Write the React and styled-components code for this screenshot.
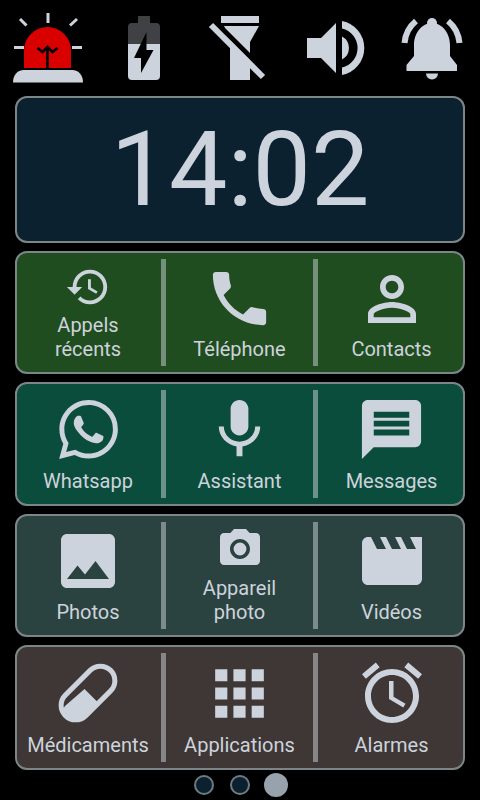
import React from "react";
import styled, { createGlobalStyle } from "styled-components";
import { SiWhatsapp } from "react-icons/si";

const ink = "#cdd3dc";

const GlobalStyle = createGlobalStyle`
  html, body {
    margin: 0;
    padding: 0;
    background: #000;
    font-family: Roboto, "Liberation Sans", sans-serif;
  }
`;

const Screen = styled.div`
  width: 480px;
  height: 800px;
  background: #000;
  overflow: hidden;
`;

// Status icons along the top
const StatusBar = styled.div`
  display: grid;
  grid-template-columns: repeat(5, 96px);
  height: 96px;
`;

const StatusIcon = styled.svg`
  display: block;
  width: 96px;
  height: 96px;
`;

const Content = styled.div`
  display: flex;
  flex-direction: column;
  gap: 8px;
  width: 450px;
  margin-left: 15px;
`;

const Panel = styled.section`
  box-sizing: border-box;
  border: 2px solid #7c8688;
  border-radius: 12px;
  background: ${({ $bg }) => $bg};
`;

const ClockPanel = styled(Panel)`
  height: 147px;
  display: flex;
  align-items: center;
  justify-content: center;
  color: ${ink};
  font-size: 104px;
  font-weight: 400;
  line-height: 1;
`;

const Rows = styled.div`
  display: flex;
  flex-direction: column;
  gap: 8px;
`;

const Row = styled(Panel)`
  height: ${({ $height }) => $height}px;
  display: grid;
  grid-template-columns: 144px 5px 147px 5px 145px;
`;

const Divider = styled.div`
  margin: 6px 0;
  background: ${ink};
  opacity: 0.5;
`;

const Tile = styled.div`
  display: flex;
  flex-direction: column;
  align-items: center;
  min-width: 0;
  padding: 7px 0 11px;

  &:first-child {
    padding-right: 2px;
  }

  &:last-child {
    padding-left: 2px;
  }
`;

const IconSlot = styled.div`
  flex: 1;
  display: flex;
  align-items: center;
  justify-content: center;
  color: ${ink};
`;

const Label = styled.div`
  color: ${ink};
  font-size: 20px;
  line-height: 24px;
  text-align: center;
  white-space: nowrap;
`;

const Glyph = styled.svg`
  display: block;
  fill: currentColor;
`;

const Dots = styled.div`
  display: flex;
  justify-content: center;
  align-items: center;
  height: 30px;
`;

const DotSlot = styled.div`
  width: 36px;
  display: flex;
  justify-content: center;
`;

const Dot = styled.div`
  box-sizing: border-box;
  width: ${({ $active }) => ($active ? 24 : 20)}px;
  height: ${({ $active }) => ($active ? 24 : 20)}px;
  border-radius: 50%;
  background: ${({ $active }) => ($active ? "#98a2ac" : "#0b2130")};
  border: ${({ $active }) => ($active ? "none" : "2px solid #6f7b82")};
`;

const paths = {
  history:
    "M13 3c-4.97 0-9 4.03-9 9H1l3.89 3.89.07.14L9 12H6c0-3.87 3.13-7 7-7s7 3.13 7 7-3.13 7-7 7c-1.93 0-3.68-.79-4.94-2.06l-1.42 1.42C8.27 19.99 10.51 21 13 21c4.97 0 9-4.03 9-9s-4.03-9-9-9zm-1 5v5l4.28 2.54.72-1.21-3.5-2.08V8H12z",
  phone:
    "M6.62 10.79c1.44 2.83 3.76 5.14 6.59 6.59l2.2-2.2c.27-.27.67-.36 1.02-.24 1.12.37 2.33.57 3.57.57.55 0 1 .45 1 1V20c0 .55-.45 1-1 1-9.39 0-17-7.61-17-17 0-.55.45-1 1-1h3.5c.55 0 1 .45 1 1 0 1.25.2 2.45.57 3.57.11.35.03.74-.25 1.02l-2.2 2.2z",
  person:
    "M12 5.9c1.16 0 2.1.94 2.1 2.1s-.94 2.1-2.1 2.1S9.9 9.16 9.9 8s.94-2.1 2.1-2.1m0 9c2.97 0 6.1 1.46 6.1 2.1v1.1H5.9V17c0-.64 3.13-2.1 6.1-2.1M12 4C9.79 4 8 5.79 8 8s1.79 4 4 4 4-1.79 4-4-1.79-4-4-4zm0 9c-2.67 0-8 1.34-8 4v3h16v-3c0-2.66-5.33-4-8-4z",
  mic:
    "M12 14c1.66 0 3-1.34 3-3V5c0-1.66-1.34-3-3-3S9 3.34 9 5v6c0 1.66 1.34 3 3 3zm5.3-3c0 3-2.54 5.1-5.3 5.1S6.7 14 6.7 11H5c0 3.41 2.72 6.23 6 6.72V21h2v-3.28c3.28-.48 6-3.3 6-6.72h-1.7z",
  message:
    "M20 2H4c-1.1 0-1.99.9-1.99 2L2 22l4-4h14c1.1 0 2-.9 2-2V4c0-1.1-.9-2-2-2zm-2 12H6v-2h12v2zm0-3H6V9h12v2zm0-3H6V6h12v2z",
  photo:
    "M21 19V5c0-1.1-.9-2-2-2H5c-1.1 0-2 .9-2 2v14c0 1.1.9 2 2 2h14c1.1 0 2-.9 2-2zM8.5 13.5l2.5 3.01L14.5 12l4.5 6H5l3.5-4.5z",
  camera:
    "M9 2L7.17 4H4c-1.1 0-2 .9-2 2v12c0 1.1.9 2 2 2h16c1.1 0 2-.9 2-2V6c0-1.1-.9-2-2-2h-3.17L15 2H9zm3 15c-2.76 0-5-2.24-5-5s2.24-5 5-5 5 2.24 5 5-2.24 5-5 5zM12 8.8a3.2 3.2 0 1 0 0 6.4 3.2 3.2 0 0 0 0-6.4z",
  movie:
    "M18 4l2 4h-3l-2-4h-2l2 4h-3l-2-4H8l2 4H7L5 4H4c-1.1 0-1.99.9-1.99 2L2 18c0 1.1.9 2 2 2h16c1.1 0 2-.9 2-2V4h-4z",
  apps:
    "M4 8h4V4H4v4zm6 12h4v-4h-4v4zm-6 0h4v-4H4v4zm0-6h4v-4H4v4zm6 0h4v-4h-4v4zm6-10v4h4V4h-4zm-6 4h4V4h-4v4zm6 6h4v-4h-4v4zm0 6h4v-4h-4v4z",
  alarm:
    "M22 5.72l-4.6-3.86-1.29 1.53 4.6 3.86L22 5.72zM7.88 3.39L6.6 1.86 2 5.71l1.29 1.53 4.59-3.85zM12.5 8H11v6l4.75 2.85.75-1.23-4-2.37V8zM12 4c-4.97 0-9 4.03-9 9s4.03 9 9 9c4.97 0 9-4.03 9-9s-4.03-9-9-9zm0 16c-3.87 0-7-3.13-7-7s3.13-7 7-7 7 3.13 7 7-3.13 7-7 7z",
};

const MaterialIcon = ({ name, size }) => (
  <Glyph viewBox="0 0 24 24" width={size} height={size}>
    <path fillRule="evenodd" d={paths[name]} />
  </Glyph>
);

const PillIcon = () => (
  <Glyph viewBox="0 0 72 72" width={72} height={72}>
    <defs>
      <clipPath id="pill-clip">
        <rect x="4" y="21.5" width="64" height="29" rx="14.5" transform="rotate(-45 36 36)" />
      </clipPath>
    </defs>
    <rect
      x="4"
      y="21.5"
      width="64"
      height="29"
      rx="14.5"
      transform="rotate(-45 36 36)"
      fill="none"
      stroke="currentColor"
      strokeWidth="5"
    />
    <polygon clipPath="url(#pill-clip)" points="13,49 32.5,32 45.5,45 70,70 0,70" />
  </Glyph>
);

const AlarmLight = () => (
  <StatusIcon viewBox="0 0 96 96">
    <path d="M24 68V50.500a23.5 23.5 0 0 1 47 0V68z" fill="#d90000" />
    <path d="M47.500 68V48M37.500 48l5 4 5-5 5 5 5-4" fill="none" stroke="#000" strokeWidth="2.6" />
    <path d="M13 82.5c0-7 4-12.500 11-12.500h48c7 0 11 5.500 11 12.500z" fill={ink} />
    <path
      d="M48 13v10M20 19l6.500 6.500M77 19l-7 6.500M14 47.500h10M72 47.500h10"
      fill="none"
      stroke={ink}
      strokeWidth="3"
    />
  </StatusIcon>
);

const Battery = () => (
  <StatusIcon viewBox="0 0 96 96">
    <path d="M42 23v-7h12v7h6a4 4 0 0 1 4 4v17H32V27a4 4 0 0 1 4-4z" fill="#3f4144" />
    <path d="M32 44h32v32a4 4 0 0 1-4 4H36a4 4 0 0 1-4-4z" fill={ink} />
    <polygon points="50.500,32 38,58 45,58 45,73 57.500,50 50.500,50" fill="#000" />
  </StatusIcon>
);

const FlashlightOff = () => (
  <StatusIcon viewBox="0 0 96 96">
    <rect x="29" y="16" width="38" height="7" fill={ink} />
    <polygon points="32,26 67,26 58,42 39,42" fill={ink} />
    <rect x="38" y="42" width="20" height="38" fill={ink} />
    <path d="M22.700 21.300l52 52" stroke="#000" strokeWidth="5" />
    <path d="M19 25l52 52" stroke={ink} strokeWidth="6" />
  </StatusIcon>
);

const Speaker = () => (
  <StatusIcon viewBox="0 0 96 96">
    <polygon points="19,38 33,38 48,23 48,73 33,58 19,58" fill={ink} />
    <path d="M54 36.500a13 13 0 0 1 0 23z" fill={ink} />
    <path
      d="M54 21a27.500 27.500 0 0 1 0 54v-7.500a20 20 0 0 0 0-39z"
      fill={ink}
    />
  </StatusIcon>
);

const Bell = () => (
  <StatusIcon viewBox="0 0 96 96">
    <circle cx="48" cy="23" r="5" fill={ink} />
    <path
      d="M30 45c0-12 8-22 18-22s18 10 18 22v11l7 9v6H22.500v-6l7.500-9z"
      fill={ink}
    />
    <path d="M42 73.500h12a6 6 0 0 1-12 0z" fill={ink} />
    <path
      d="M32 21a32 32 0 0 0-11.500 22M64 21a32 32 0 0 1 11.500 22"
      fill="none"
      stroke={ink}
      strokeWidth="6"
    />
  </StatusIcon>
);

const rows = [
  {
    bg: "#204d1f",
    height: 123.33,
    tiles: [
      { icon: <MaterialIcon name="history" size={46} />, label: ["Appels", "récents"] },
      { icon: <MaterialIcon name="phone" size={71} />, label: ["Téléphone"] },
      { icon: <MaterialIcon name="person" size={72} />, label: ["Contacts"] },
    ],
  },
  {
    bg: "#0b4d3c",
    height: 123.33,
    tiles: [
      { icon: <SiWhatsapp size={59} />, label: ["Whatsapp"] },
      { icon: <MaterialIcon name="mic" size={71} />, label: ["Assistant"] },
      { icon: <MaterialIcon name="message" size={71} />, label: ["Messages"] },
    ],
  },
  {
    bg: "#2b4340",
    height: 123.33,
    tiles: [
      { icon: <MaterialIcon name="photo" size={72} />, label: ["Photos"] },
      { icon: <MaterialIcon name="camera" size={48} />, label: ["Appareil", "photo"] },
      { icon: <MaterialIcon name="movie" size={72} />, label: ["Vidéos"] },
    ],
  },
  {
    bg: "#3e3735",
    height: 125,
    tiles: [
      { icon: <PillIcon />, label: ["Médicaments"] },
      { icon: <MaterialIcon name="apps" size={73} />, label: ["Applications"] },
      { icon: <MaterialIcon name="alarm" size={72} />, label: ["Alarmes"] },
    ],
  },
];

export default function App() {
  return (
    <Screen>
      <GlobalStyle />
      <StatusBar>
        <AlarmLight />
        <Battery />
        <FlashlightOff />
        <Speaker />
        <Bell />
      </StatusBar>
      <Content>
        <ClockPanel $bg="#0b2130">14:02</ClockPanel>
        <Rows>
          {rows.map((row) => (
            <Row key={row.bg} $bg={row.bg} $height={row.height}>
              {row.tiles.map((tile, i) => (
                <React.Fragment key={tile.label[0]}>
                  {i > 0 && <Divider />}
                  <Tile>
                    <IconSlot>{tile.icon}</IconSlot>
                    {tile.label.map((line) => (
                      <Label key={line}>{line}</Label>
                    ))}
                  </Tile>
                </React.Fragment>
              ))}
            </Row>
          ))}
        </Rows>
      </Content>
      <Dots>
        <DotSlot><Dot /></DotSlot>
        <DotSlot><Dot /></DotSlot>
        <DotSlot><Dot $active /></DotSlot>
      </Dots>
    </Screen>
  );
}
